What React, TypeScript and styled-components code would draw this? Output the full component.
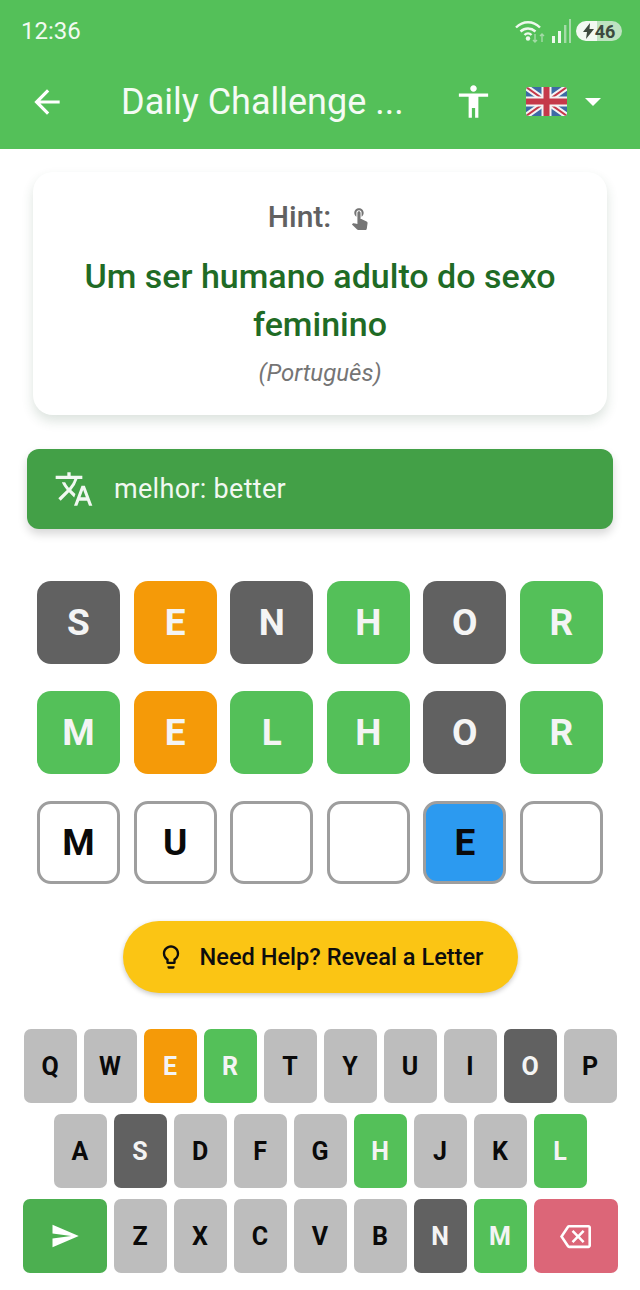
import { MdAccessibility, MdArrowBack, MdOutlineBackspace, MdOutlineLightbulb, MdSend, MdTouchApp, MdTranslate } from 'react-icons/md';
import styled, { createGlobalStyle } from 'styled-components';

type TileState = 'absent' | 'present' | 'correct' | 'empty' | 'active';
type KeyState = 'idle' | 'absent' | 'present' | 'correct';

const TILE_COLORS: Record<TileState, string> = {
  absent: '#616161',
  present: '#F59A08',
  correct: '#54C059',
  empty: '#FFFFFF',
  active: '#2C9AF0',
};

const KEY_COLORS: Record<KeyState, string> = {
  idle: '#BDBDBD',
  absent: '#616161',
  present: '#F59A08',
  correct: '#54C059',
};

const GUESSES: { letter: string; state: TileState }[][] = [
  [
    { letter: 'S', state: 'absent' },
    { letter: 'E', state: 'present' },
    { letter: 'N', state: 'absent' },
    { letter: 'H', state: 'correct' },
    { letter: 'O', state: 'absent' },
    { letter: 'R', state: 'correct' },
  ],
  [
    { letter: 'M', state: 'correct' },
    { letter: 'E', state: 'present' },
    { letter: 'L', state: 'correct' },
    { letter: 'H', state: 'correct' },
    { letter: 'O', state: 'absent' },
    { letter: 'R', state: 'correct' },
  ],
  [
    { letter: 'M', state: 'empty' },
    { letter: 'U', state: 'empty' },
    { letter: '', state: 'empty' },
    { letter: '', state: 'empty' },
    { letter: 'E', state: 'active' },
    { letter: '', state: 'empty' },
  ],
];

const KEY_STATES: Record<string, KeyState> = {
  E: 'present',
  R: 'correct',
  O: 'absent',
  S: 'absent',
  H: 'correct',
  L: 'correct',
  N: 'absent',
  M: 'correct',
};

const GlobalStyle = createGlobalStyle`
  html, body {
    margin: 0;
    padding: 0;
    background: #ffffff;
  }
  body {
    font-family: Roboto, "Liberation Sans", sans-serif;
  }
`;

const Page = styled.div`
  width: 640px;
  height: 1290px;
  display: flex;
  flex-direction: column;
  overflow: hidden;
  background: #ffffff;
`;

const Header = styled.header`
  height: 149px;
  flex-shrink: 0;
  background: #54c059;
  color: #ffffff;
  display: flex;
  flex-direction: column;
`;

const StatusBar = styled.div`
  height: 62px;
  padding: 0 18px 0 21px;
  display: flex;
  align-items: center;
  justify-content: space-between;
`;

const Clock = styled.span`
  font-size: 24px;
  color: #f1faf1;
`;

const StatusIcons = styled.div`
  display: flex;
  align-items: center;
  gap: 5px;
`;

const Battery = styled.div`
  width: 46px;
  height: 20px;
  border-radius: 10px;
  display: flex;
  align-items: center;
  justify-content: center;
  gap: 1px;
  color: #3d4a3e;
  font-size: 18px;
  font-weight: 700;
  background: linear-gradient(90deg, #f2f9f2 0 46%, #bfe3c1 46% 100%);
`;

const AppBar = styled.div`
  height: 87px;
  padding: 0 38px 8px 28px;
  box-sizing: border-box;
  display: flex;
  align-items: center;
`;

const Title = styled.h1`
  margin: 0 0 0 55px;
  width: 333px;
  font-size: 36px;
  font-weight: 400;
  white-space: nowrap;
  color: #f4fbf4;
`;

const FlagGroup = styled.div`
  margin-left: 33px;
  display: flex;
  align-items: center;
  gap: 18px;
`;

const Arrow = styled.span`
  width: 0;
  height: 0;
  border-left: 8px solid transparent;
  border-right: 8px solid transparent;
  border-top: 8px solid #ffffff;
`;

const HintCard = styled.section`
  margin: 23px 33px 0;
  height: 243px;
  flex-shrink: 0;
  box-sizing: border-box;
  padding-top: 28px;
  border-radius: 20px;
  background: #ffffff;
  box-shadow: 0 6px 12px rgba(40, 80, 50, 0.16);
  display: flex;
  flex-direction: column;
  align-items: center;
  text-align: center;
`;

const HintLabel = styled.div`
  display: flex;
  align-items: center;
  gap: 16px;
  font-size: 30px;
  font-weight: 500;
  line-height: 34px;
  color: #616161;
`;

const HintText = styled.p`
  margin: 18px 0 0;
  width: 500px;
  font-size: 34px;
  font-weight: 500;
  line-height: 48px;
  color: #1f6b25;
`;

const HintLanguage = styled.span`
  margin-top: 8px;
  font-size: 24px;
  font-style: italic;
  line-height: 34px;
  color: #757575;
`;

const TranslationBar = styled.div`
  margin: 34px 27px 0;
  height: 80px;
  flex-shrink: 0;
  box-sizing: border-box;
  padding-left: 27px;
  border-radius: 12px;
  background: #43a047;
  box-shadow: 0 5px 10px rgba(0, 0, 0, 0.16);
  color: #f1f8f1;
  display: flex;
  align-items: center;
  gap: 20px;
  font-size: 27px;
  letter-spacing: 0.3px;
`;

const Board = styled.div`
  margin: 52px 37px 0;
  display: flex;
  flex-direction: column;
  gap: 27px;
`;

const BoardRow = styled.div`
  display: flex;
  justify-content: space-between;
`;

const Tile = styled.div<{ $state: TileState }>`
  width: 83px;
  height: 83px;
  box-sizing: border-box;
  border-radius: 14px;
  display: flex;
  align-items: center;
  justify-content: center;
  font-size: 37px;
  font-weight: 700;
  background: ${(p) => TILE_COLORS[p.$state]};
  color: ${(p) => (p.$state === 'empty' || p.$state === 'active' ? '#0a0a0a' : '#f4f4f4')};
  border: ${(p) => (p.$state === 'empty' || p.$state === 'active' ? '3px solid #9e9e9e' : 'none')};
`;

const HelpButton = styled.button`
  margin: 37px auto 0;
  width: 395px;
  height: 72px;
  flex-shrink: 0;
  border: none;
  border-radius: 36px;
  background: #fbc514;
  box-shadow: 0 2px 5px rgba(0, 0, 0, 0.22);
  display: flex;
  align-items: center;
  justify-content: center;
  gap: 15px;
  padding: 0;
  color: #0d0d0d;
  font-family: inherit;
  font-size: 23.6px;
  font-weight: 500;
`;

const Keyboard = styled.div`
  margin-top: 36px;
  display: flex;
  flex-direction: column;
  gap: 11px;
`;

const KeyRow = styled.div`
  display: flex;
  justify-content: center;
  gap: 7px;
`;

const Key = styled.div<{ $state: KeyState }>`
  width: 53px;
  height: 74px;
  border-radius: 7px;
  display: flex;
  align-items: center;
  justify-content: center;
  font-size: 25px;
  font-weight: 700;
  background: ${(p) => KEY_COLORS[p.$state]};
  color: ${(p) => (p.$state === 'idle' ? '#0a0a0a' : '#f4f4f4')};
`;

const ActionKey = styled.div<{ $color: string }>`
  width: 84px;
  height: 74px;
  border-radius: 7px;
  display: flex;
  align-items: center;
  justify-content: center;
  color: #ffffff;
  background: ${(p) => p.$color};
`;

const WifiIcon = () => (
  <svg width="32" height="26" viewBox="0 0 32 26" fill="none">
    <path d="M2 9.5C9 2.5 19 2.5 26 9.5" stroke="#eef8ee" strokeWidth="2.4" />
    <path d="M6.5 13.5C11 9.5 17 9.5 21.5 13.5" stroke="#eef8ee" strokeWidth="2.4" />
    <path d="M10.5 17C12.5 15 15.5 15 17.5 17" stroke="#eef8ee" strokeWidth="2.4" />
    <circle cx="14" cy="20.5" r="2.2" fill="#eef8ee" />
    <path d="M21 16v8M19 22l2 2 2-2" stroke="#a5dba8" strokeWidth="1.4" />
    <path d="M28 24v-8M26 18l2-2 2 2" stroke="#a5dba8" strokeWidth="1.4" />
  </svg>
);

const SignalIcon = () => (
  <svg width="20" height="26" viewBox="0 0 20 26">
    <rect x="1" y="18" width="3" height="7" fill="#eef8ee" />
    <rect x="7" y="13" width="3" height="12" fill="#eef8ee" />
    <rect x="13" y="7" width="2.4" height="18" fill="#a5dba8" />
    <rect x="18" y="1" width="2" height="24" fill="#a5dba8" />
  </svg>
);

const BoltIcon = () => (
  <svg width="11" height="16" viewBox="0 0 11 16">
    <path d="M7 0L0 9h4l-1 7 8-10H6.5z" fill="#3d4a3e" />
  </svg>
);

const FlagIcon = () => (
  <svg width="41" height="29" viewBox="0 0 41 29">
    <defs>
      <clipPath id="flag">
        <rect width="41" height="29" rx="3" />
      </clipPath>
    </defs>
    <g clipPath="url(#flag)">
      <rect width="41" height="29" fill="#3d6aa5" />
      <path d="M0 0L41 29M41 0L0 29" stroke="#f4f4f4" strokeWidth="6" />
      <path d="M0 0L41 29M41 0L0 29" stroke="#c5394a" strokeWidth="2" />
      <path d="M20.5 0V29M0 14.5H41" stroke="#f4f4f4" strokeWidth="10" />
      <path d="M20.5 0V29M0 14.5H41" stroke="#c5394a" strokeWidth="6" />
    </g>
  </svg>
);

const App = () => (
  <Page>
    <GlobalStyle />
    <Header>
      <StatusBar>
        <Clock>12:36</Clock>
        <StatusIcons>
          <WifiIcon />
          <SignalIcon />
          <Battery>
            <BoltIcon />
            46
          </Battery>
        </StatusIcons>
      </StatusBar>
      <AppBar>
        <MdArrowBack size={38} />
        <Title>Daily Challenge ...</Title>
        <MdAccessibility size={39} />
        <FlagGroup>
          <FlagIcon />
          <Arrow />
        </FlagGroup>
      </AppBar>
    </Header>

    <HintCard>
      <HintLabel>
        Hint:
        <MdTouchApp size={25} color="#757575" />
      </HintLabel>
      <HintText>Um ser humano adulto do sexo feminino</HintText>
      <HintLanguage>(Português)</HintLanguage>
    </HintCard>

    <TranslationBar>
      <MdTranslate size={40} />
      melhor: better
    </TranslationBar>

    <Board>
      {GUESSES.map((row, rowIndex) => (
        <BoardRow key={rowIndex}>
          {row.map((tile, tileIndex) => (
            <Tile key={tileIndex} $state={tile.state}>
              {tile.letter}
            </Tile>
          ))}
        </BoardRow>
      ))}
    </Board>

    <HelpButton>
      <MdOutlineLightbulb size={28} />
      Need Help? Reveal a Letter
    </HelpButton>

    <Keyboard>
      <KeyRow>
        {'QWERTYUIOP'.split('').map((letter) => (
          <Key key={letter} $state={KEY_STATES[letter] ?? 'idle'}>
            {letter}
          </Key>
        ))}
      </KeyRow>
      <KeyRow>
        {'ASDFGHJKL'.split('').map((letter) => (
          <Key key={letter} $state={KEY_STATES[letter] ?? 'idle'}>
            {letter}
          </Key>
        ))}
      </KeyRow>
      <KeyRow>
        <ActionKey $color="#4CAF50">
          <MdSend size={30} />
        </ActionKey>
        {'ZXCVBNM'.split('').map((letter) => (
          <Key key={letter} $state={KEY_STATES[letter] ?? 'idle'}>
            {letter}
          </Key>
        ))}
        <ActionKey $color="#DC6678">
          <MdOutlineBackspace size={31} />
        </ActionKey>
      </KeyRow>
    </Keyboard>
  </Page>
);

export default App;
